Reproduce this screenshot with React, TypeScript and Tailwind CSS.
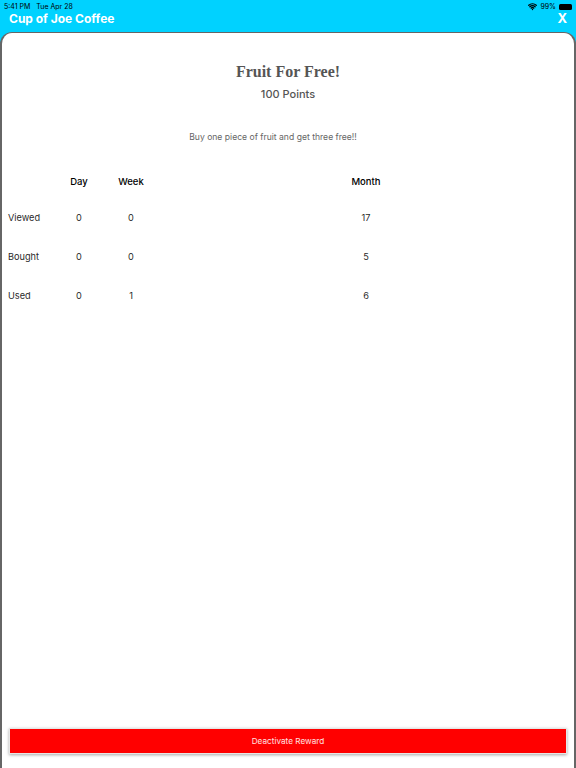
import { Wifi } from 'lucide-react'

const ROWS = [
  { label: 'Viewed', day: 0, week: 0, month: 17 },
  { label: 'Bought', day: 0, week: 0, month: 5 },
  { label: 'Used', day: 0, week: 1, month: 6 },
]

function StatusBar() {
  return (
    <div className="flex h-[12px] items-center justify-between pl-1 pr-[4px] pt-[1px] text-[7px] leading-none text-black">
      <div className="flex gap-[6px]">
        <span>5:41 PM</span>
        <span>Tue Apr 28</span>
      </div>
      <div className="flex items-center gap-[3px]">
        <Wifi size={9} strokeWidth={3.5} />
        <span>99%</span>
        <div className="h-[6px] w-[13px] rounded-[1.5px] bg-black" />
      </div>
    </div>
  )
}

export default function App() {
  return (
    <div className="flex h-[768px] w-[576px] flex-col overflow-hidden bg-[#00d2ff] font-['Inter',sans-serif]">
      <StatusBar />
      <div className="flex h-[20px] items-center justify-between px-[9px] pb-[7px] text-white">
        <span className="text-[12px] font-bold leading-none">Cup of Joe Coffee</span>
        <span className="text-[13px] font-bold leading-none">X</span>
      </div>

      <div className="-mb-3 flex flex-1 flex-col rounded-t-[12px] border-x-2 border-t border-[#666666] bg-white">
        <h1 className="mt-[29px] text-center font-['Liberation_Serif',serif] text-[16px] font-bold leading-[20px] text-[#555555]">
          Fruit For Free!
        </h1>
        <p className="mt-[4px] text-center text-[11px] font-medium leading-[16px] text-[#555555]">100 Points</p>
        <p className="mt-[29px] pr-[30px] text-center text-[8.6px] leading-[12px] text-[#666666]">
          Buy one piece of fruit and get three free!!
        </p>

        <div className="mt-[33px] grid grid-cols-[48px_46px_58px_412px] pl-[6px] text-[9.5px] text-black">
          <div className="h-[12px]" />
          <div className="text-center font-medium leading-[12px]">Day</div>
          <div className="text-center font-medium leading-[12px]">Week</div>
          <div className="text-center font-medium leading-[12px]">Month</div>
        </div>

        <div className="mt-[24px] flex flex-col gap-[27px] pl-[6px] text-[9.2px] text-[#2a2a2a]">
          {ROWS.map((r) => (
            <div key={r.label} className="grid grid-cols-[48px_46px_58px_412px] leading-[12px]">
              <div>{r.label}</div>
              <div className="text-center">{r.day}</div>
              <div className="text-center">{r.week}</div>
              <div className="text-center">{r.month}</div>
            </div>
          ))}
        </div>

        <div className="mt-auto mb-[26px] px-[7px]">
          <button className="h-[26px] w-full border border-[#e6e6e6] bg-[#ff0000] text-[8.2px] text-[#ffe0e0] shadow-[0_1px_3px_rgba(0,0,0,0.35)]">
            Deactivate Reward
          </button>
        </div>
      </div>
    </div>
  )
}
